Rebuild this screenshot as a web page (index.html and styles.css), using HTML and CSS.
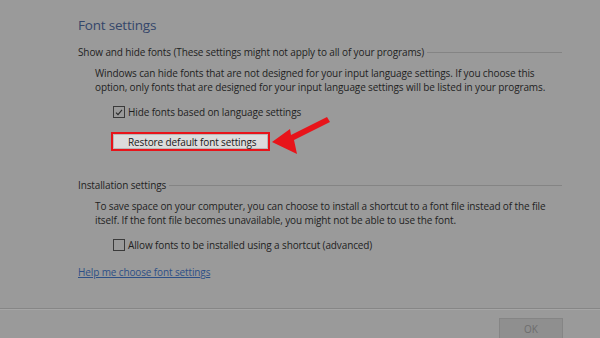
FILE: index.html
```html
<!DOCTYPE html>
<html>
<head>
<meta charset="utf-8">
<link rel="stylesheet" href="styles.css">
</head>
<body>
<div class="dialog">
  <div class="content">
    <h1 class="title">Font settings</h1>
    <div class="group-head"><span>Show and hide fonts (These settings might not apply to all of your programs)</span><i class="rule"></i></div>
    <p class="desc">Windows can hide fonts that are not designed for your input language settings. If you choose this<br>option, only fonts that are designed for your input language settings will be listed in your programs.</p>
    <label class="check"><span class="box checked"><svg viewBox="0 0 11 11" width="11" height="11"><path d="M2.2 5.6 L4.4 7.9 L8.8 2.6" fill="none" stroke="#2a2a2a" stroke-width="1.2"/></svg></span>Hide fonts based on language settings</label>
    <div class="btn-row">
      <button class="btn">Restore default font settings</button>
      <svg class="arrow" viewBox="0 0 70 45" width="70" height="45"><path d="M2 27 L20 14 L21 20 L57 2 L60 7 L24 25 L27 39 Z" fill="#e8141a"/></svg>
    </div>
    <div class="group-head second"><span>Installation settings</span><i class="rule"></i></div>
    <p class="desc">To save space on your computer, you can choose to install a shortcut to a font file instead of the file<br>itself. If the font file becomes unavailable, you might not be able to use the font.</p>
    <label class="check"><span class="box"></span>Allow fonts to be installed using a shortcut (advanced)</label>
    <a class="help" href="#">Help me choose font settings</a>
  </div>
  <div class="footer">
    <button class="ok">OK</button>
  </div>
</div>
</body>
</html>
```
FILE: styles.css
```css
html, body {
  margin: 0;
  padding: 0;
  background: #9a9a9a;
  width: 600px;
  height: 338px;
  overflow: hidden;
}
.dialog {
  display: flex;
  flex-direction: column;
  height: 338px;
  font-family: "Open Sans", "Noto Sans", sans-serif;
  font-size: 10px;
  letter-spacing: -0.12px;
  color: #1f1f1f;
}
.content {
  flex: 1;
  padding: 15px 38px 0 78px;
  display: flex;
  flex-direction: column;
}
.title {
  margin: 0;
  font-weight: normal;
  font-size: 13.5px;
  letter-spacing: -0.2px;
  line-height: 20px;
  color: #34466a;
}
.group-head {
  display: flex;
  align-items: center;
  margin-top: 10px;
  line-height: 14px;
}
.group-head.second { margin-top: 27px; }
.group-head .rule {
  flex: 1;
  height: 1px;
  background: #848484;
  margin-left: 3px;
  margin-top: 1px;
}
.desc {
  margin: 7px 0 0 17px;
  line-height: 14px;
}
.check {
  display: flex;
  align-items: center;
  margin: 11px 0 0 35px;
  line-height: 14px;
}
.box {
  width: 10px;
  height: 10px;
  border: 1px solid #3a3a3a;
  margin-right: 3px;
  display: flex;
  align-items: center;
  justify-content: center;
}
.box svg { display: block; }
.btn-row {
  position: relative;
  display: flex;
  margin: 13px 0 0 33px;
}
.btn {
  width: 159px;
  height: 19px;
  border: 2px solid #e8141a;
  background: #dcdcdc;
  box-shadow: inset 0 0 0 1px #b8b8b8;
  font: inherit;
  letter-spacing: inherit;
  color: #1a1a1a;
  padding: 0 0 0 15px;
  text-align: left;
}
.arrow {
  position: absolute;
  left: 159px;
  top: -17px;
}
.help {
  margin-top: 13px;
  color: #2d4f86;
  text-decoration: underline;
  line-height: 14px;
  align-self: flex-start;
}
.footer {
  height: 20px;
  border-top: 1px solid #868686;
  box-shadow: inset 0 1px 0 #a6a6a6;
  display: flex;
  justify-content: flex-end;
  align-items: flex-start;
  padding: 9px 37px 0 0;
}
.ok {
  width: 64px;
  height: 22px;
  border: 1px solid #858585;
  background: #8f8f8f;
  font: inherit;
  color: #6d6d6d;
  padding: 0;
}
```
